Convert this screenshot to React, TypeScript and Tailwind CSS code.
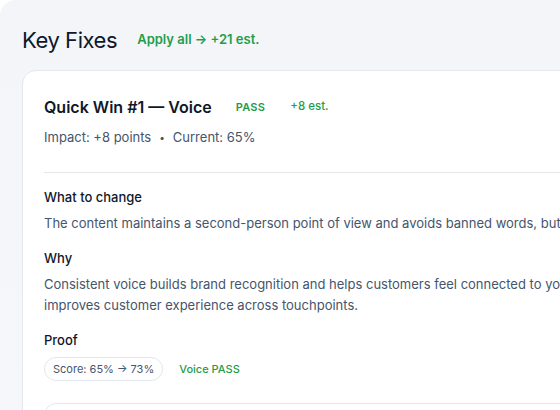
const green = "text-[#1f9d4c]";

function Section({ title, children }: { title: string; children: React.ReactNode }) {
  return (
    <div>
      <h4 className="text-[13px] font-medium leading-5 text-slate-900">{title}</h4>
      {children}
    </div>
  );
}

export default function App() {
  return (
    <div className="h-[410px] w-[560px] overflow-hidden bg-white font-['Inter','Liberation_Sans',sans-serif]">
      <div className="w-[900px] rounded-2xl bg-gradient-to-b from-[#f3f5f9] to-[#f5f7fa] px-[22px] pb-10 pt-[24px]">
        <header className="flex items-center gap-5">
          <h2 className="text-[22px] font-normal leading-8 tracking-[-0.02em] text-slate-900">Key Fixes</h2>
          <span className={`text-[13px] font-semibold ${green}`}>Apply all → +21 est.</span>
        </header>

        <article className="mt-[14px] w-[700px] rounded-[14px] border border-[#e3e8ef] bg-white px-[21px] pt-[22px]">
          <div className="flex items-center">
            <h3 className="text-[16px] font-semibold leading-7 text-slate-900">Quick Win #1 — Voice</h3>
            <span className={`ml-6 text-[11px] font-semibold tracking-wide ${green}`}>PASS</span>
            <span className={`ml-[25px] text-[11.5px] font-medium ${green}`}>+8 est.</span>
          </div>
          <p className="mt-1.5 flex items-center gap-2 text-[13px] leading-5 text-slate-600">
            <span>Impact: +8 points</span>
            <span className="text-[10px]">•</span>
            <span>Current: 65%</span>
          </p>

          <div className="mt-[25px] space-y-[14px] border-t border-[#e5e7eb] pt-[14px]">
            <Section title="What to change">
              <p className="mt-[6px] w-[640px] text-[13px] leading-[21px] text-slate-600">
                The content maintains a second-person point of view and avoids banned words, but lacks warmth.
              </p>
            </Section>
            <Section title="Why">
              <p className="mt-[6px] w-[640px] text-[13px] leading-[21px] text-slate-600">
                Consistent voice builds brand recognition and helps customers feel connected to your brand, and it improves customer experience across touchpoints.
              </p>
            </Section>
            <Section title="Proof">
              <div className="mt-[7px] flex items-center gap-4">
                <span className="rounded-full border border-[#e2e8f0] px-2 py-[3px] text-[11px] leading-4 text-slate-600">
                  Score: 65% → 73%
                </span>
                <span className={`text-[11px] font-medium ${green}`}>Voice PASS</span>
              </div>
            </Section>
          </div>

          <div className="mt-[22px] h-20 rounded-xl border border-[#e5e7eb] bg-white" />
        </article>
      </div>
    </div>
  );
}
